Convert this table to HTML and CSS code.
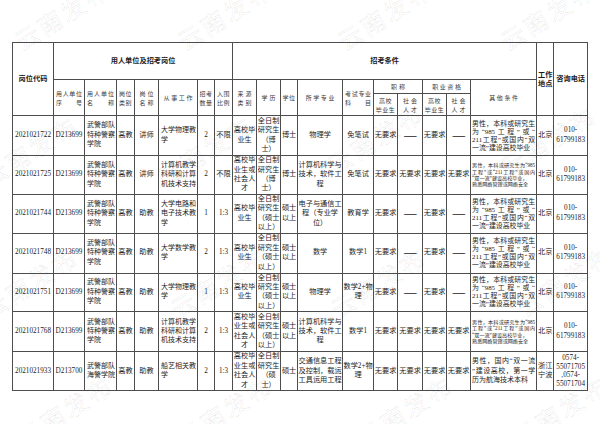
FILE: index.html
```html
<!DOCTYPE html>
<html lang="zh-CN">
<head>
<meta charset="utf-8">
<title>招考岗位表</title>
<link rel="stylesheet" href="styles.css">
</head>
<body>
<div class="wrap">
<table class="grid">
<colgroup>
<col class="c41"><col class="c31"><col class="c32"><col class="c18"><col class="c24"><col class="c39"><col class="c17"><col class="c18"><col class="c24"><col class="c24"><col class="c17"><col class="c45"><col class="c31"><col class="c24"><col class="c25"><col class="c24"><col class="c24"><col class="c66"><col class="c17"><col class="c34">
</colgroup>
<thead>
<tr class="h1">
<th rowspan="3" class="b">岗位代码</th>
<th colspan="7" class="b">用人单位及招考岗位</th>
<th colspan="10" class="b">招考条件</th>
<th rowspan="3" class="b">工作<br>地点</th>
<th rowspan="3" class="b">咨询电话</th>
</tr>
<tr class="h2">
<th rowspan="2" class="hd pj"><span class="j">用人单位</span><span class="j">序号</span></th>
<th rowspan="2" class="hd pj"><span class="j">用人单位</span><span class="j">名称</span></th>
<th rowspan="2" class="hd">岗位<br>类别</th>
<th rowspan="2" class="hd sp">岗位<br>名称</th>
<th rowspan="2" class="hd sp2">从事工作</th>
<th rowspan="2" class="hd">招考<br>数量</th>
<th rowspan="2" class="hd">入围<br>比例</th>
<th rowspan="2" class="hd sp">来源<br>类别</th>
<th rowspan="2" class="hd sp">学历</th>
<th rowspan="2" class="hd">学位</th>
<th rowspan="2" class="hd sp2">所学专业</th>
<th rowspan="2" class="hd pj"><span class="j">考试专业</span><span class="j">科目</span></th>
<th colspan="2" class="hd sp">职称</th>
<th colspan="2" class="hd sp2">职业资格</th>
<th rowspan="2" class="hd sp2">其他条件</th>
</tr>
<tr class="h3">
<th class="hd">高校<br>毕业生</th>
<th class="hd sp">社会<br>人才</th>
<th class="hd">高校<br>毕业生</th>
<th class="hd sp">社会<br>人才</th>
</tr>
</thead>
<tbody>
<tr class="r40">
<td>2021021722</td><td>D213699</td>
<td class="l">武警部队<br>特种警察<br>学院</td>
<td>高教</td><td>讲师</td>
<td class="l">大学物理教<br>学</td>
<td>2</td><td>不限</td>
<td>高校毕<br>业生</td>
<td>全日制<br>研究生<br>（博<br>士）</td>
<td>博士</td>
<td>物理学</td>
<td>免笔试</td>
<td>无要求</td><td class="dash">——</td><td>无要求</td><td class="dash">——</td>
<td class="oc"><span class="j">男性，本科或研究生</span><span class="j">为“985工程”或“</span><span class="j">211工程”或国内“双</span><span class="ll">一流”建设高校毕业</span></td>
<td>北京</td>
<td>010-<br>61799183</td>
</tr>
<tr class="r39">
<td>2021021725</td><td>D213699</td>
<td class="l">武警部队<br>特种警察<br>学院</td>
<td>高教</td><td>讲师</td>
<td class="l">计算机教学<br>科研和计算<br>机技术支持</td>
<td>2</td><td>不限</td>
<td>高校毕<br>业生或<br>社会人<br>才</td>
<td>全日制<br>研究生<br>（博<br>士）</td>
<td>博士</td>
<td>计算机科学与<br>技术，软件工<br>程</td>
<td>免笔试</td>
<td>无要求</td><td>无要求</td><td>无要求</td><td>无要求</td>
<td class="oc os"><span class="j">男性，本科或研究生为“985</span><span class="j">工程”或“211工程”或国内</span><span class="ll">“双一流”建设高校毕业，</span><span class="ll">熟悉网络管理或网络安全</span></td>
<td>北京</td>
<td>010-<br>61799183</td>
</tr>
<tr class="r38">
<td>2021021744</td><td>D213699</td>
<td class="l">武警部队<br>特种警察<br>学院</td>
<td>高教</td><td>助教</td>
<td class="l">大学电路和<br>电子技术教<br>学</td>
<td>1</td><td>1:3</td>
<td>高校毕<br>业生</td>
<td>全日制<br>研究生<br>（硕士<br>以上）</td>
<td>硕士<br>以上</td>
<td>电子与通信工<br>程（专业学<br>位）</td>
<td>教育学</td>
<td>无要求</td><td class="dash">——</td><td>无要求</td><td class="dash">——</td>
<td class="oc"><span class="j">男性，本科或研究生</span><span class="j">为“985工程”或“</span><span class="j">211工程”或国内“双</span><span class="ll">一流”建设高校毕业</span></td>
<td>北京</td>
<td>010-<br>61799183</td>
</tr>
<tr class="r40">
<td>2021021748</td><td>D213699</td>
<td class="l">武警部队<br>特种警察<br>学院</td>
<td>高教</td><td>助教</td>
<td class="l">大学数学教<br>学</td>
<td>2</td><td>1:3</td>
<td>高校毕<br>业生</td>
<td>全日制<br>研究生<br>（硕士<br>以上）</td>
<td>硕士<br>以上</td>
<td>数学</td>
<td>数学1</td>
<td>无要求</td><td class="dash">——</td><td>无要求</td><td class="dash">——</td>
<td class="oc"><span class="j">男性，本科或研究生</span><span class="j">为“985工程”或“</span><span class="j">211工程”或国内“双</span><span class="ll">一流”建设高校毕业</span></td>
<td>北京</td>
<td>010-<br>61799183</td>
</tr>
<tr class="r38">
<td>2021021751</td><td>D213699</td>
<td class="l">武警部队<br>特种警察<br>学院</td>
<td>高教</td><td>助教</td>
<td class="l">大学物理教<br>学</td>
<td>1</td><td>1:3</td>
<td>高校毕<br>业生</td>
<td>全日制<br>研究生<br>（硕士<br>以上）</td>
<td>硕士<br>以上</td>
<td>物理学</td>
<td>数学2+物<br>理</td>
<td>无要求</td><td class="dash">——</td><td>无要求</td><td class="dash">——</td>
<td class="oc"><span class="j">男性，本科或研究生</span><span class="j">为“985工程”或“</span><span class="j">211工程”或国内“双</span><span class="ll">一流”建设高校毕业</span></td>
<td>北京</td>
<td>010-<br>61799183</td>
</tr>
<tr class="r40">
<td>2021021768</td><td>D213699</td>
<td class="l">武警部队<br>特种警察<br>学院</td>
<td>高教</td><td>助教</td>
<td class="l">计算机教学<br>科研和计算<br>机技术支持</td>
<td>2</td><td>1:3</td>
<td>高校毕<br>业生或<br>社会人<br>才</td>
<td>全日制<br>研究生<br>（硕士<br>以上）</td>
<td>硕士<br>以上</td>
<td>计算机科学与<br>技术，软件工<br>程</td>
<td>数学1</td>
<td>无要求</td><td>无要求</td><td>无要求</td><td>无要求</td>
<td class="oc os"><span class="j">男性，本科或研究生为“985</span><span class="j">工程”或“211工程”或国内</span><span class="ll">“双一流”建设高校毕业，</span><span class="ll">熟悉网络管理或网络安全</span></td>
<td>北京</td>
<td>010-<br>61799183</td>
</tr>
<tr class="r39">
<td>2021021933</td><td>D213700</td>
<td class="l">武警部队<br>海警学院</td>
<td>高教</td><td>助教</td>
<td class="l">船艺相关教<br>学</td>
<td>2</td><td>1:3</td>
<td>高校毕<br>业生或<br>社会人<br>才</td>
<td>全日制<br>研究生<br>（硕<br>士）</td>
<td>硕士</td>
<td>交通信息工程<br>及控制，载运<br>工具运用工程</td>
<td>数学2+物<br>理</td>
<td>无要求</td><td>无要求</td><td>无要求</td><td>无要求</td>
<td class="oc ob"><span class="j">男性，国内“双一流</span><span class="j">”建设高校，第一学</span><span class="ll">历为航海技术本科</span></td>
<td>浙江<br>宁波</td>
<td class="ph">0574-<br>55071705<br>,0574-<br>55071704</td>
</tr>
</tbody>
</table>
</div>

<div class="marks" aria-hidden="true">
<div class="wm wa1">云南发布</div>
<div class="wm wa2">云南发布</div>
<div class="wm wa3">云南发布</div>
<div class="wm wa4">云南发布</div>
<div class="wm wb1">云南发布</div>
<div class="wm wb2">云南发布</div>
<div class="wm wb3">云南发布</div>
<div class="wm wb4">云南发布</div>
<div class="wm wc1">云南发布</div>
<div class="wm wc2">云南发布</div>
<div class="wm wc3">云南发布</div>
<div class="wm wc4">云南发布</div>
<div class="wm wd1">云南发布</div>
<div class="wm wd2">云南发布</div>
<div class="wm wd3">云南发布</div>
<div class="wm wd4">云南发布</div>
</div>
</body>
</html>
```

FILE: styles.css
```css
html, body {
  margin: 0;
  padding: 0;
}
html {
  overflow: hidden;
}
body {
  width: 600px;
  height: 424px;
  position: relative;
  overflow: hidden;
  background: #ffffff;
  color: #1c1c1c;
  font-family: "Liberation Serif", "Noto Sans CJK SC", serif;
}
.wrap {
  padding: 42px 0 0 12px;
}
.grid {
  border-collapse: collapse;
  table-layout: fixed;
  width: 575px;
}
.c41 { width: 41px; }
.c31 { width: 31px; }
.c32 { width: 32px; }
.c18 { width: 18px; }
.c24 { width: 24px; }
.c39 { width: 39px; }
.c17 { width: 17px; }
.c25 { width: 25px; }
.c45 { width: 45px; }
.c66 { width: 66px; }
.c34 { width: 34px; }

.grid th,
.grid td {
  border: 1px solid #4d4d4d;
  padding: 0;
  text-align: center;
  vertical-align: middle;
  font-size: 7.2px;
  line-height: 9.4px;
  white-space: nowrap;
  overflow: hidden;
  font-weight: normal;
}
.h1 { height: 37px; }
.h2 { height: 14px; }
.h3 { height: 22px; }
.r40 { height: 40px; }
.r39 { height: 39px; }
.r38 { height: 38px; }

.grid th.b {
  font-family: "Noto Sans CJK SC", sans-serif;
  font-weight: 700;
  font-size: 7.2px;
  line-height: 9.5px;
  color: #1a1a1a;
}
.grid th.hd {
  font-family: "Noto Sans CJK SC", sans-serif;
  font-size: 6px;
  line-height: 9px;
  color: #3a3a3a;
  letter-spacing: 0.6px;
}
.grid th.sp {
  letter-spacing: 2px;
  padding-left: 2px;
}
.grid th.sp2 {
  letter-spacing: 1.6px;
  padding-left: 1.6px;
}
.grid th.pj {
  padding: 0 2px;
  letter-spacing: 0;
}
.j {
  display: block;
  white-space: normal;
  text-align: justify;
  text-align-last: justify;
}
.ll {
  display: block;
  text-align: left;
}
.grid td.l {
  text-align: left;
  padding-left: 2px;
  font-size: 7px;
}
.grid td.dash {
  font-family: "Liberation Sans", sans-serif;
  font-weight: 700;
  font-size: 6.6px;
  letter-spacing: -0.6px;
}
.grid td.oc {
  padding: 0 1px;
  font-size: 6.9px;
  line-height: 8px;
  text-align: left;
}
.grid td.os {
  font-size: 5.1px;
  line-height: 6.4px;
}
.grid td.ob {
  font-size: 7px;
  line-height: 9.3px;
}
.grid td.ph {
  line-height: 8.6px;
}

.marks {
  position: absolute;
  left: 0;
  top: 0;
  width: 600px;
  height: 424px;
  overflow: hidden;
  pointer-events: none;
}
.wm {
  position: absolute;
  font-family: "Noto Sans CJK SC", sans-serif;
  font-size: 24px;
  font-weight: 400;
  letter-spacing: 3px;
  color: transparent;
  -webkit-text-stroke: 0.6px rgba(0, 0, 0, 0.1);
  transform: translate(-50%, -50%) rotate(-32deg);
  white-space: nowrap;
}
.wa1 { left: 62px; top: 14px; }
.wa2 { left: 225px; top: 14px; }
.wa3 { left: 385px; top: 14px; }
.wa4 { left: 548px; top: 14px; }
.wb1 { left: 30px; top: 150px; }
.wb2 { left: 205px; top: 150px; }
.wb3 { left: 375px; top: 138px; }
.wb4 { left: 548px; top: 140px; }
.wc1 { left: 30px; top: 282px; }
.wc2 { left: 218px; top: 282px; }
.wc3 { left: 378px; top: 282px; }
.wc4 { left: 565px; top: 280px; }
.wd1 { left: 65px; top: 410px; }
.wd2 { left: 225px; top: 410px; }
.wd3 { left: 405px; top: 410px; }
.wd4 { left: 560px; top: 410px; }
```
